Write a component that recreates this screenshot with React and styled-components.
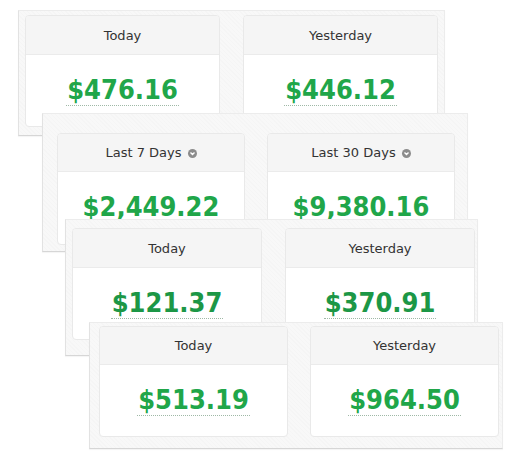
import React from "react";
import styled, { createGlobalStyle } from "styled-components";

const Global = createGlobalStyle`
  html, body { margin: 0; padding: 0; background: #ffffff; }
  body { font-family: "DejaVu Sans", sans-serif; }
`;

const Canvas = styled.div`
  position: relative;
  width: 520px;
  height: 465px;
  overflow: hidden;
  background: #ffffff;
`;

const Panel = styled.div`
  position: absolute;
  left: ${(p) => p.$x}px;
  top: ${(p) => p.$y}px;
  width: ${(p) => p.$w}px;
  height: ${(p) => p.$h}px;
  box-sizing: border-box;
  padding: ${(p) => p.$pad};
  display: grid;
  grid-template-columns: 1fr 1fr;
  column-gap: ${(p) => p.$gap}px;
  align-items: start;
  background-color: #f8f8f8;
  background-image: repeating-linear-gradient(
    45deg,
    rgba(0, 0, 0, 0.012) 0px,
    rgba(0, 0, 0, 0.012) 1px,
    transparent 1px,
    transparent 3px
  );
  border: 1px solid #ececec;
  border-bottom-color: #d6d6d6;
  border-left-color: #e2e2e2;
  box-shadow: 0 1px 1px rgba(0, 0, 0, 0.04);
`;

const Card = styled.div`
  height: ${(p) => p.$h || 112}px;
  box-sizing: border-box;
  display: flex;
  flex-direction: column;
  background: #ffffff;
  border: 1px solid #e9e9e9;
  border-radius: 4px;
  overflow: hidden;
`;

const Header = styled.div`
  height: ${(p) => p.$h || 37}px;
  flex: none;
  display: flex;
  align-items: center;
  justify-content: center;
  gap: 6px;
  background: #f5f5f5;
  border-bottom: 1px solid #ebebeb;
  color: #333333;
  font-family: "DejaVu Sans", sans-serif;
  font-size: 13px;
`;

const Chevron = styled.span`
  width: 9px;
  height: 9px;
  border-radius: 50%;
  background: #8c8c8c;
  display: inline-flex;
  align-items: center;
  justify-content: center;
  margin-top: 2px;
`;

const Body = styled.div`
  flex: 1;
  display: flex;
  justify-content: center;
  align-items: flex-start;
  padding-top: 20px;
`;

const Amount = styled.span`
  font-family: "DejaVu Sans Condensed", "DejaVu Sans", sans-serif;
  font-weight: bold;
  font-size: 27px;
  line-height: 30px;
  color: ${(p) => p.$color || "#20a649"};
  border-bottom: 1px dotted #9fb8a6;
  padding: 0 1px;
`;

const ChevronIcon = () => (
  <Chevron>
    <svg width="7" height="7" viewBox="0 0 7 7">
      <path d="M1.5 2.6 L3.5 4.5 L5.5 2.6" fill="none" stroke="#fff" strokeWidth="1.4" />
    </svg>
  </Chevron>
);

const layers = [
  {
    x: 18, y: 10, w: 427, h: 126, pad: "4px 6px 0 6px", gap: 23, hh: 38,
    cards: [
      { label: "Today", value: "$476.16" },
      { label: "Yesterday", value: "$446.12" },
    ],
  },
  {
    x: 42, y: 113, w: 426, h: 139, pad: "19px 12px 0 14px", gap: 22, hh: 37,
    cards: [
      { label: "Last 7 Days", value: "$2,449.22", menu: true },
      { label: "Last 30 Days", value: "$9,380.16", menu: true },
    ],
  },
  {
    x: 65, y: 219, w: 413, h: 137, pad: "8px 2px 0 6px", gap: 23, hh: 38, color: "#1c9746",
    cards: [
      { label: "Today", value: "$121.37" },
      { label: "Yesterday", value: "$370.91" },
    ],
  },
  {
    x: 89, y: 322, w: 414, h: 127, pad: "3px 3px 0 9px", gap: 22, hh: 37, ch: 111,
    cards: [
      { label: "Today", value: "$513.19" },
      { label: "Yesterday", value: "$964.50" },
    ],
  },
];

export default function App() {
  return (
    <>
      <Global />
      <Canvas>
        {layers.map((l, i) => (
          <Panel key={i} $x={l.x} $y={l.y} $w={l.w} $h={l.h} $pad={l.pad} $gap={l.gap}>
            {l.cards.map((c) => (
              <Card key={c.label} $h={l.ch}>
                <Header $h={l.hh}>
                  {c.label}
                  {c.menu && <ChevronIcon />}
                </Header>
                <Body>
                  <Amount $color={l.color}>{c.value}</Amount>
                </Body>
              </Card>
            ))}
          </Panel>
        ))}
      </Canvas>
    </>
  );
}
